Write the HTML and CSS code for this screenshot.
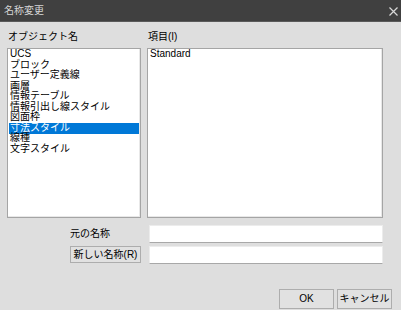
FILE: index.html
```html
<!DOCTYPE html>
<html lang="ja">
<head>
<meta charset="utf-8">
<title>名称変更</title>
<link rel="stylesheet" href="styles.css">
</head>
<body>
<div class="dialog">
  <div class="titlebar">
    <span class="title">名称変更</span>
    <svg class="close" width="9" height="9" viewBox="0 0 9 9"><path d="M0.5 0.5 L8.5 8.5 M8.5 0.5 L0.5 8.5" stroke="#d8d8d8" stroke-width="1.2" fill="none"/></svg>
  </div>
  <div class="main">
    <div class="cols">
      <div class="col">
        <div class="label">オブジェクト名</div>
        <ul class="list">
          <li>UCS</li>
          <li>ブロック</li>
          <li>ユーザー定義線</li>
          <li>画層</li>
          <li>情報テーブル</li>
          <li>情報引出し線スタイル</li>
          <li>図面枠</li>
          <li class="selected">寸法スタイル</li>
          <li>線種</li>
          <li>文字スタイル</li>
        </ul>
      </div>
      <div class="col">
        <div class="label">項目(I)</div>
        <ul class="list">
          <li>Standard</li>
        </ul>
      </div>
    </div>
    <div class="form">
      <div class="form-label">元の名称</div>
      <div class="input"></div>
      <button class="btn name-btn">新しい名称(R)</button>
      <div class="input"></div>
    </div>
    <div class="footer">
      <button class="btn foot-btn">OK</button>
      <button class="btn foot-btn">キャンセル</button>
    </div>
  </div>
</div>
</body>
</html>
```

FILE: styles.css
```css
* { box-sizing: border-box; }
html, body {
  margin: 0;
  padding: 0;
  width: 401px;
  height: 310px;
  overflow: hidden;
  background: #dedede;
  font-family: "Liberation Sans", "Noto Sans CJK JP", sans-serif;
  font-size: 10px;
  color: #000;
}
.dialog {
  width: 401px;
  height: 310px;
  display: flex;
  flex-direction: column;
}
.titlebar {
  height: 22px;
  background: #404040;
  border-bottom: 1px solid #5a5a5a;
  display: flex;
  align-items: center;
  justify-content: space-between;
  padding: 0 2px 0 4px;
}
.title {
  color: #d6d6d6;
  font-size: 10px;
  line-height: 12px;
}
.close {
  margin-top: 1px;
  margin-right: 0;
  width: 9px;
  height: 9px;
  margin-right: 1px;
}
.main {
  padding: 9px 9px 0 7px;
  display: flex;
  flex-direction: column;
}
.cols {
  display: grid;
  grid-template-columns: 134px 236px;
  column-gap: 6px;
}
.col {
  display: flex;
  flex-direction: column;
  gap: 5px;
}
.label {
  line-height: 12px;
  height: 12px;
  padding-left: 1px;
}
.list {
  list-style: none;
  margin: 0;
  padding: 0 1px;
  height: 170px;
  background: #fff;
  border: 1px solid #a5a5a5;
  box-shadow: inset -1px -1px 0 #e8e8e8;
}
.list li {
  line-height: 10.5px;
  height: 10.5px;
  padding-left: 1px;
  white-space: nowrap;
}
.list li.selected {
  background: #0078d7;
  color: #fff;
  height: 11px;
  margin-bottom: -0.5px;
}
.form {
  margin-top: 7px;
  display: grid;
  grid-template-columns: 134px 234px;
  column-gap: 8px;
  row-gap: 3px;
}
.form-label {
  justify-self: end;
  align-self: center;
  padding-right: 31px;
  line-height: 12px;
}
.input {
  height: 18px;
  background: #fff;
  border: 1px solid #ececec;
  border-bottom-color: #a8a8a8;
}
.btn {
  font-family: "Liberation Sans", "Noto Sans CJK JP", sans-serif;
  font-size: 10px;
  color: #000;
  background: #e1e1e1;
  border: 1px solid #adadad;
  padding: 0;
  margin: 0;
  line-height: 14px;
}
.name-btn {
  justify-self: end;
  width: 71px;
  height: 17px;
}
.footer {
  margin-top: 25px;
  display: flex;
  justify-content: flex-end;
  gap: 3px;
  padding-right: 0;
}
.foot-btn {
  width: 55px;
  height: 20px;
}
```
